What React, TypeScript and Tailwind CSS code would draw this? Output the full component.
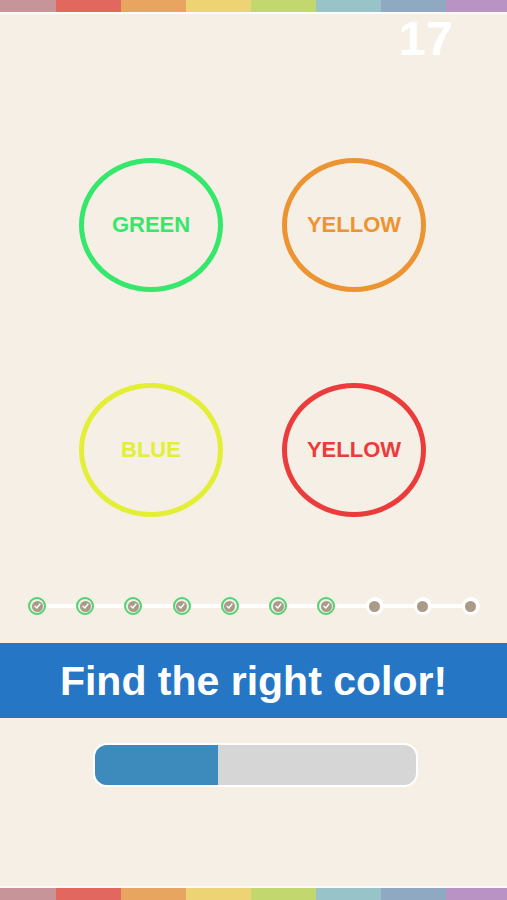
import React from "react";

const stripe = [
  { c: "bg-[#c79499]", w: "w-[56px]" },
  { c: "bg-[#e2675f]", w: "w-[65px]" },
  { c: "bg-[#e8a55f]", w: "w-[65px]" },
  { c: "bg-[#edd373]", w: "w-[65px]" },
  { c: "bg-[#c3d76f]", w: "w-[65px]" },
  { c: "bg-[#98c4c9]", w: "w-[65px]" },
  { c: "bg-[#90a9c3]", w: "w-[65px]" },
  { c: "bg-[#b893c4]", w: "flex-1" },
];

function Stripe() {
  return (
    <div className="flex h-[12px] w-full">
      {stripe.map((s, i) => (
        <div key={i} className={`${s.c} ${s.w} h-full`} />
      ))}
    </div>
  );
}

const circles = [
  { label: "GREEN", border: "border-[#35e86b]", text: "text-[#35e86b]" },
  { label: "YELLOW", border: "border-[#ec9431]", text: "text-[#ec9431]" },
  { label: "BLUE", border: "border-[#e2ef36]", text: "text-[#e2ef36]" },
  { label: "YELLOW", border: "border-[#ec3b3b]", text: "text-[#ec3b3b]" },
];

function Check() {
  return (
    <svg width="7" height="6" viewBox="0 0 7 6" fill="none">
      <path d="M1 3.2 L2.8 5 L6 1" stroke="white" strokeWidth="1.4" strokeLinecap="round" strokeLinejoin="round" />
    </svg>
  );
}

export default function App() {
  const dots = Array.from({ length: 10 }, (_, i) => i < 7);
  return (
    <div
      className="min-h-[900px] w-full bg-[#f6efe6] flex flex-col"
      style={{ fontFamily: '"Liberation Sans", Arial, sans-serif' }}
    >
      <Stripe />
      <div className="h-[2px] bg-white/80" />
      <div className="h-[50px] flex justify-end pr-[54px]">
        <span className="text-[49px] font-bold leading-none text-white">17</span>
      </div>

      <div className="mt-[94px] pl-[79px] grid grid-cols-[144px_144px] gap-x-[59px] gap-y-[91px]">
        {circles.map((c, i) => (
          <div
            key={i}
            className={`h-[134px] w-[144px] rounded-[50%] border-[5px] ${c.border} flex items-center justify-center`}
          >
            <span className={`text-[22px] font-bold ${c.text} leading-none`}>{c.label}</span>
          </div>
        ))}
      </div>

      <div className="mt-[80px] ml-[28px] w-[452px] h-[18px] relative flex items-center justify-between">
        <div className="absolute left-[9px] right-[9px] top-[7px] h-[4px] bg-white" />
        {dots.map((done, i) =>
          done ? (
            <div
              key={i}
              className="relative h-[18px] w-[18px] rounded-full border-2 border-[#4fd46c] bg-[#f3f0ea] flex items-center justify-center"
            >
              <div className="h-[11px] w-[11px] rounded-full bg-[#a99a8a] flex items-center justify-center">
                <Check />
              </div>
            </div>
          ) : (
            <div
              key={i}
              className="relative h-[18px] w-[18px] rounded-full bg-white flex items-center justify-center"
            >
              <div className="h-[11px] w-[11px] rounded-full bg-[#a99a8a]" />
            </div>
          )
        )}
      </div>

      <div className="mt-[28px] h-[75px] bg-[#2577c6] flex items-center justify-center pt-[2px]">
        <span className="text-[41px] font-bold text-white leading-none">Find the right color!</span>
      </div>

      <div className="mt-[25px] ml-[93px] w-[325px] h-[44px] rounded-[14px] border-2 border-white bg-[#d6d6d6] overflow-hidden flex">
        <div className="w-[123px] h-full bg-[#3d8bbd]" />
      </div>

      <div className="mt-auto h-[2px] bg-white/70" />
      <Stripe />
    </div>
  );
}
